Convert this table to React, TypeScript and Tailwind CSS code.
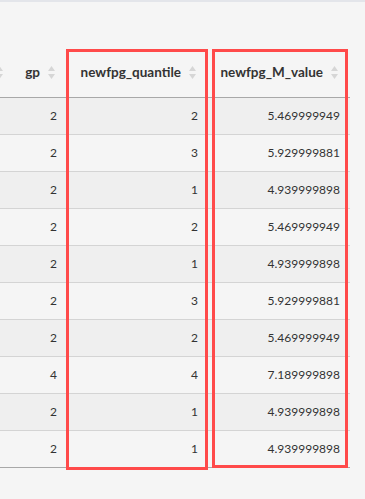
import React from 'react';

const rows: [number, number, string][] = [
  [2, 2, '5.469999949'],
  [2, 3, '5.929999881'],
  [2, 1, '4.939999898'],
  [2, 2, '5.469999949'],
  [2, 1, '4.939999898'],
  [2, 3, '5.929999881'],
  [2, 2, '5.469999949'],
  [4, 4, '7.189999898'],
  [2, 1, '4.939999898'],
  [2, 1, '4.939999898'],
];

function SortIcon() {
  return (
    <svg width="7" height="13" viewBox="0 0 7 13" className="shrink-0">
      <path d="M3.5 0 L7 5 L0 5 Z" fill="#d6d6d6" />
      <path d="M0 8 L7 8 L3.5 13 Z" fill="#d6d6d6" />
    </svg>
  );
}

const cols = 'grid grid-cols-[8px_58px_141px_143px] w-[350px]';

export default function App() {
  return (
    <div
      className="relative w-[365px] h-[499px] bg-[#f5f5f5] border-t-2 border-[#e3e5ea] overflow-hidden text-[#333]"
      style={{ fontFamily: 'Lato, "Open Sans", sans-serif' }}
    >
      <div className="pt-[46px]">
        <div className={`${cols} h-[50px] border-b border-[#a8a8a8] text-[13.5px] font-bold`}>
          <div className="relative overflow-hidden">
            <div className="absolute right-[5px] top-[18px]">
              <SortIcon />
            </div>
          </div>
          <div className="flex items-center justify-end gap-[8px] pr-[11px]">
            <span>gp</span>
            <SortIcon />
          </div>
          <div className="flex items-center justify-end gap-[8px] pr-[11px]">
            <span>newfpg_quantile</span>
            <SortIcon />
          </div>
          <div className="flex items-center justify-end gap-[8px] pr-[12px]">
            <span>newfpg_M_value</span>
            <SortIcon />
          </div>
        </div>
        {rows.map((r, i) => (
          <div
            key={i}
            className={`${cols} h-[37px] text-[12px] border-b ${
              i === rows.length - 1 ? 'border-[#a8a8a8]' : 'border-[#d4d4d4]'
            } ${i % 2 === 0 ? 'bg-[#efefef]' : 'bg-[#f5f5f5]'}`}
          >
            <div />
            <div className="flex items-center justify-end pr-[9px]">{r[0]}</div>
            <div className="flex items-center justify-end pr-[9px]">{r[1]}</div>
            <div className="flex items-center justify-end pr-[10px]">{r[2]}</div>
          </div>
        ))}
      </div>

      <div className="absolute left-[66px] top-[47px] w-[142px] h-[421px] border-[3px] border-[#ff4a4a]" />
      <div className="absolute left-[212px] top-[47px] w-[136px] h-[419px] border-[3px] border-[#ff4a4a]" />
    </div>
  );
}
